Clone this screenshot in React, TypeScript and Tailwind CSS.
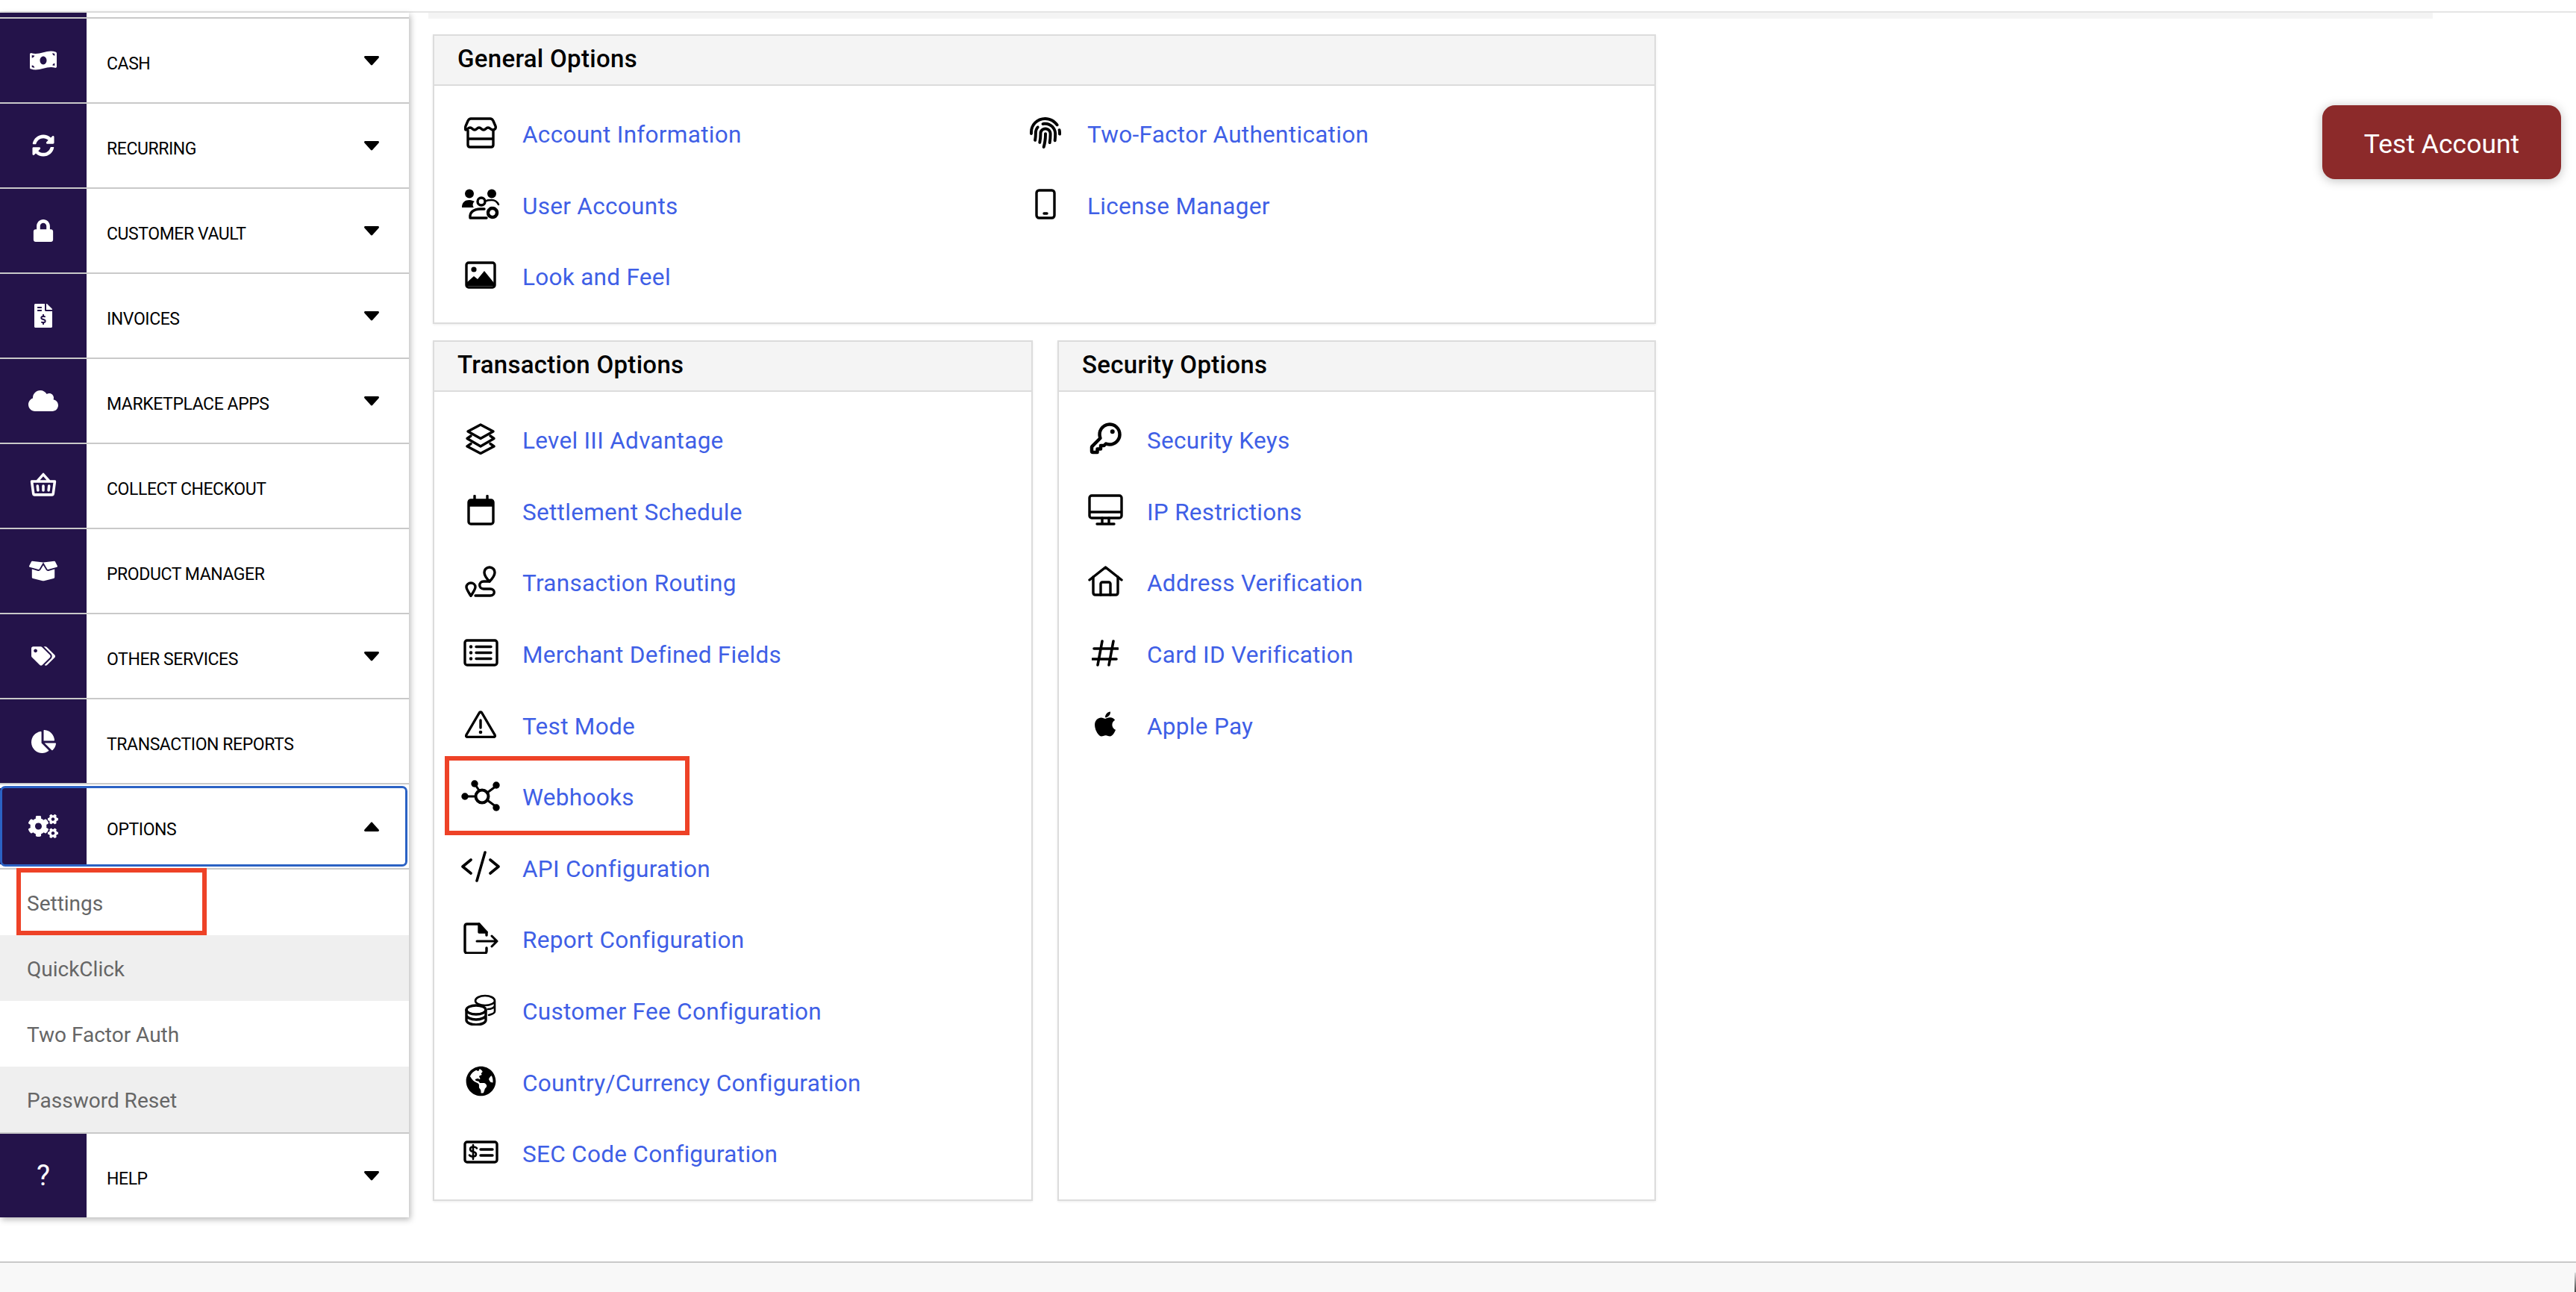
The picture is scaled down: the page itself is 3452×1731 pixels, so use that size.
import React from "react";
import {
  FaMoneyBillWave, FaSyncAlt, FaLock, FaFileInvoiceDollar, FaCloud, FaBoxOpen, FaTags, FaChartPie, FaCogs, FaGlobeAmericas, FaApple, FaFingerprint,
} from "react-icons/fa";
import { PiBasketBold, PiKeyBold } from "react-icons/pi";

const S = ({ w, h, children }: { w: number; h: number; children: React.ReactNode }) => (
  <svg width={w} height={h} viewBox={`0 0 ${w} ${h}`} fill="none" stroke="#000" strokeWidth={3.4} strokeLinecap="round" strokeLinejoin="round">
    {children}
  </svg>
);

const Store = () => (
  <S w={44} h={42}>
    <path d="M9 2h26c2 0 3 1 4 3l3 7c1 3-1 5-3.5 5-3 0-3.500-3-6.500-3s-3 3-6 3-3-3-6-3-3 3-6 3-3-3-6-3-3.500 3-6 3C2 17 1 15 2 12l3-7c1-2 2-3 4-3z" />
    <path d="M5 18v19c0 2 1 3 3 3h28c2 0 3-1 3-3V18M5 29h34" />
  </S>
);
const Users = () => (
  <S w={52} h={41}>
    <circle cx="11" cy="6.500" r="6" fill="#000" stroke="none" />
    <circle cx="41" cy="6.500" r="6" fill="#000" stroke="none" />
    <path d="M1 25c0-7 4-10 10-10 3 0 5 1 7 2-3 2-3 6-1 8H1z" fill="#000" stroke="none" />
    <circle cx="27" cy="17" r="5" />
    <path d="M34 16c1-1 4-1 7-1 4 0 7 2 9 6" strokeWidth={2.5} />
    <path d="M34 39H12c-1-7 4-12 14-12h5" />
    <circle cx="42" cy="32" r="6" stroke="#000" strokeWidth={4.5} strokeDasharray="3 1.7" />
    <circle cx="42" cy="32" r="6" strokeWidth={2.8} />
  </S>
);
const ImageIco = () => (
  <S w={42} h={37}>
    <rect x="2" y="2" width="38" height="33" rx="3" />
    <circle cx="12" cy="11" r="3.600" fill="#000" stroke="none" />
    <path d="M3 33v-5l9-8 5 4 9-11 13 16v4z" fill="#000" stroke="none" />
  </S>
);
const Layers = () => (
  <S w={42} h={42}>
    <path d="M21 2l17 9-17 9.500L4 11z" />
    <path d="M8 17l-5 3.500L21 31l18-10.500-5-3.500" />
    <path d="M8 27.500L3 31l18 9.500L39 31l-5-3.500" />
  </S>
);
const Calendar = () => (
  <S w={37} h={41}>
    <rect x="2" y="7" width="33" height="32" rx="3" />
    <path d="M3 8h31v6H3z" fill="#000" />
    <path d="M10 1.500V7M27 1.500V7" />
  </S>
);
const Route = () => (
  <S w={42} h={42}>
    <path d="M33 2c-4 0-7 3-7 7 0 4 4 9 7 12 3-3 7-8 7-12 0-4-3-7-7-7z" />
    <path d="M8 23c-3 0-6 2-6 5.500 0 3 3 7 6 12 3-5 6-9 6-12C14 25 11 23 8 23z" />
    <path d="M33 21h-8c-7 0-7 10 0 10h9c7 0 7 9 0 9H14" />
  </S>
);
const ListIco = () => (
  <S w={47} h={37}>
    <rect x="2" y="2" width="43" height="33" rx="3" />
    <path d="M17 10.500h20M17 18.500h20M17 26.500h20" />
    <path d="M10 10.500h.1M10 18.500h.1M10 26.500h.1" strokeWidth={4.4} />
  </S>
);
const Warning = () => (
  <S w={42} h={37}>
    <path d="M19 3.500c1-2 3-2 4 0l17 29c1 2 0 3-2 3H4c-2 0-3-1-2-3z" />
    <path d="M21 13v10" />
    <circle cx="21" cy="29" r="2.300" fill="#000" stroke="none" />
  </S>
);
const Webhook = () => (
  <S w={52} h={42}>
    <circle cx="28" cy="22" r="8.500" strokeWidth={4} />
    <path d="M5 22h14M18 5l6 9M47 8l-12 9M47 36l-12-9" strokeWidth={3} />
    <circle cx="5" cy="22" r="4.700" fill="#000" stroke="none" />
    <circle cx="18" cy="5" r="4.700" fill="#000" stroke="none" />
    <circle cx="47" cy="7" r="4.700" fill="#000" stroke="none" />
    <circle cx="47" cy="37" r="4.700" fill="#000" stroke="none" />
  </S>
);
const Code = () => (
  <S w={52} h={42}>
    <path d="M13 12L2 21l11 9M39 12l11 9-11 9M32 2L21 40" strokeWidth={3.6} />
  </S>
);
const Report = () => (
  <S w={47} h={42}>
    <path d="M31 17v-4L21 2H5C3 2 2 3 2 5v33c0 2 1 3 3 3h24c1 0 2-1 2-3v-4" />
    <path d="M21 2v11h10" fill="#000" />
    <path d="M18 25h27M38 18l7 7-7 7" strokeWidth={3} />
  </S>
);
const Coins = () => (
  <S w={42} h={42}>
    <ellipse cx="15" cy="21" rx="13" ry="6" />
    <path d="M2 21v14c0 3 6 6 13 6s13-3 13-6V21M2 28c0 3 6 6 13 6s13-3 13-6" />
    <path d="M14 9c0-4 6-7 13-7s13 3 13 7v14c0 2-4 4-8 5M14 9c0 3 6 6 13 6s13-3 13-6M31 20c4 0 9-2 9-5" strokeWidth={2.6} />
  </S>
);
const Sec = () => (
  <S w={47} h={31}>
    <rect x="2" y="2" width="43" height="27" rx="3" />
    <path d="M18 10.500c-1-1.500-3-2-5-2-3 0-4 1.500-4 3.200s1.500 2.800 4 3.300 4 1.600 4 3.300-1.500 3.200-4 3.200c-2 0-4-.5-5-2M13 6v19" strokeWidth={2.6} />
    <path d="M23 12h16M23 20h16" />
  </S>
);
const Monitor = () => (
  <S w={47} h={42}>
    <rect x="2" y="2" width="43" height="30" rx="3" />
    <path d="M2.500 24h42M19 32v8M28 32v8M12 40h23" />
  </S>
);
const House = () => (
  <S w={47} h={41}>
    <path d="M2 19L23.500 2 45 19" />
    <path d="M7 15v21c0 2 1 3 3 3h27c2 0 3-1 3-3V15" />
    <path d="M17 39V24c0-1 1-2 2-2h9c1 0 2 1 2 2v15" />
  </S>
);
const Hash = () => (
  <S w={36} h={36}>
    <path d="M14 2L8 34M29 2l-6 32M3 12h32M1 26h32" strokeWidth={3.6} />
  </S>
);
const Phone = () => (
  <S w={28} h={41}>
    <rect x="2" y="2" width="24" height="37" rx="3.500" />
    <path d="M12 33h4" />
  </S>
);

const Caret = ({ up }: { up?: boolean }) => (
  <svg width="20" height="13" viewBox="0 0 20 13" className={up ? "rotate-180" : ""}>
    <path d="M1.500 0h17c1.300 0 2 1.600 1 2.600l-8.500 9.500c-.6.600-1.500.600-2 0L.5 2.600C-.5 1.600.2 0 1.500 0z" fill="#000" />
  </svg>
);

const nav: [React.ReactNode, string, boolean][] = [
  [<FaMoneyBillWave size={36} />, "CASH", true],
  [<FaSyncAlt size={30} />, "RECURRING", true],
  [<FaLock size={30} />, "CUSTOMER VAULT", true],
  [<FaFileInvoiceDollar size={32} />, "INVOICES", true],
  [<FaCloud size={40} />, "MARKETPLACE APPS", true],
  [<PiBasketBold size={38} />, "COLLECT CHECKOUT", false],
  [<FaBoxOpen size={38} />, "PRODUCT MANAGER", false],
  [<FaTags size={32} />, "OTHER SERVICES", true],
  [<FaChartPie size={33} />, "TRANSACTION REPORTS", false],
];

const NavRow = ({ icon, label, caret }: { icon: React.ReactNode; label: string; caret?: boolean }) => (
  <div className="flex h-[114px] border-t-2 border-[#c9c9c9]">
    <div className="flex w-[116px] items-center justify-center bg-[#24134a] text-white">{icon}</div>
    <div className="flex flex-1 items-center pl-[27px] pr-[40px]">
      <span className="flex-1 pt-[10px] text-[23px] tracking-[-0.42px] text-black">{label}</span>
      {caret && <Caret />}
    </div>
  </div>
);

const SubRow = ({ label, shade, boxed }: { label: string; shade?: boolean; boxed?: boolean }) => (
  <div className={`relative flex h-[88px] items-center pl-[36px] pt-[4px] text-[28px] text-[#666] ${shade ? "bg-[#efefef]" : "bg-white"}`}>
    {label}
    {boxed && <div className="absolute left-[22px] top-[-2px] h-[90px] w-[255px] border-[6px] border-[#ee4227]" />}
  </div>
);

const Item = ({ icon, label, boxed }: { icon: React.ReactNode; label: string; boxed?: boolean }) => (
  <div className="relative flex h-[95.6px] items-center">
    <div className="flex w-[88px] items-center justify-center pb-[8px]">{icon}</div>
    <a className="ml-[12px] pb-[2px] text-[31.5px] tracking-[0.3px] text-[#3f5fe6]">{label}</a>
    {boxed && <div className="absolute left-[-4px] top-[-9px] h-[106px] w-[328px] border-[6px] border-[#ee4227]" />}
  </div>
);

const Card = ({ title, className, children }: { title: string; className: string; children: React.ReactNode }) => (
  <div className={`border-2 border-[#dcdcdc] bg-white shadow-[0_1px_3px_rgba(0,0,0,0.08)] ${className}`}>
    <div className="flex h-[67px] items-center border-b-2 border-[#dcdcdc] bg-[#f4f4f4] pb-[3px] pl-[31px] text-[33px] font-medium tracking-[0.3px] text-black">{title}</div>
    {children}
  </div>
);

export default function App() {
  return (
    <div className="relative flex h-[1731px] w-full flex-col overflow-hidden bg-white font-[Roboto,sans-serif]">
      <div className="h-[17px] shrink-0 border-b-2 border-[#e5e5e5]" />
      <div className="flex flex-1">
        <aside className="w-[548px] shrink-0 self-start bg-white shadow-[2px_3px_8px_rgba(0,0,0,0.28)]">
          <div className="h-[6px] w-[116px] bg-[#24134a]" />
          {nav.map(([icon, label, caret]) => (
            <NavRow key={label} icon={icon} label={label} caret={caret} />
          ))}
          <div className="relative flex h-[114px] border-t-2 border-[#c9c9c9]">
            <div className="my-[5px] flex w-[116px] items-center justify-center bg-[#24134a] text-white">
              <FaCogs size={40} />
            </div>
            <div className="flex flex-1 items-center pl-[27px] pr-[40px]">
              <span className="flex-1 pt-[10px] text-[23px] tracking-[-0.42px] text-black">OPTIONS</span>
              <Caret up />
            </div>
            <div className="absolute left-0 top-[2px] h-[108px] w-[546px] rounded-[7px] border-[3px] border-[#2b62c4]" />
          </div>
          <div className="border-t-2 border-[#c9c9c9]">
            <SubRow label="Settings" boxed />
            <SubRow label="QuickClick" shade />
            <SubRow label="Two Factor Auth" />
            <SubRow label="Password Reset" shade />
          </div>
          <NavRow icon={<span className="text-[38px] leading-none">?</span>} label="HELP" caret />
        </aside>
        <main className="min-w-0 flex-1">
          <div className="ml-[26px] h-[8px] w-[2686px] bg-[#f4f4f4]" />
          <div className="ml-[32px] mt-[21px] w-[1639px]">
            <Card title="General Options" className="h-[388px]">
              <div className="flex pl-[18px] pt-[19px]">
                <div className="w-[757px]">
                  <Item icon={<Store />} label="Account Information" />
                  <Item icon={<Users />} label="User Accounts" />
                  <Item icon={<ImageIco />} label="Look and Feel" />
                </div>
                <div>
                  <Item icon={<FaFingerprint size={42} />} label="Two-Factor Authentication" />
                  <Item icon={<Phone />} label="License Manager" />
                </div>
              </div>
            </Card>
            <div className="mt-[22px] flex gap-[33px]">
              <Card title="Transaction Options" className="h-[1153px] w-[804px]">
                <div className="pl-[18px] pt-[19px]">
                  <Item icon={<Layers />} label="Level III Advantage" />
                  <Item icon={<Calendar />} label="Settlement Schedule" />
                  <Item icon={<Route />} label="Transaction Routing" />
                  <Item icon={<ListIco />} label="Merchant Defined Fields" />
                  <Item icon={<Warning />} label="Test Mode" />
                  <Item icon={<Webhook />} label="Webhooks" boxed />
                  <Item icon={<Code />} label="API Configuration" />
                  <Item icon={<Report />} label="Report Configuration" />
                  <Item icon={<Coins />} label="Customer Fee Configuration" />
                  <Item icon={<FaGlobeAmericas size={41} />} label="Country/Currency Configuration" />
                  <Item icon={<Sec />} label="SEC Code Configuration" />
                </div>
              </Card>
              <Card title="Security Options" className="h-[1153px] w-[802px]">
                <div className="pl-[18px] pt-[19px]">
                  <Item icon={<PiKeyBold size={48} />} label="Security Keys" />
                  <Item icon={<Monitor />} label="IP Restrictions" />
                  <Item icon={<House />} label="Address Verification" />
                  <Item icon={<Hash />} label="Card ID Verification" />
                  <Item icon={<FaApple size={38} />} label="Apple Pay" />
                </div>
              </Card>
            </div>
          </div>
        </main>
      </div>
      <div className="h-[41px] shrink-0 border-t-2 border-[#c9c9c9] bg-[#f8f8f8]" />
      <button className="absolute left-[3112px] top-[141px] flex h-[99px] w-[320px] items-center justify-center rounded-[17px] bg-[#8c2a2a] pt-[6px] text-[35.5px] text-white shadow-[0_2px_14px_rgba(0,0,0,0.25)]">
        Test Account
      </button>
      <div className="absolute bottom-0 right-0 h-[26px] w-[2px] bg-gradient-to-b from-[#dddddd] to-[#444444]" />
    </div>
  );
}
